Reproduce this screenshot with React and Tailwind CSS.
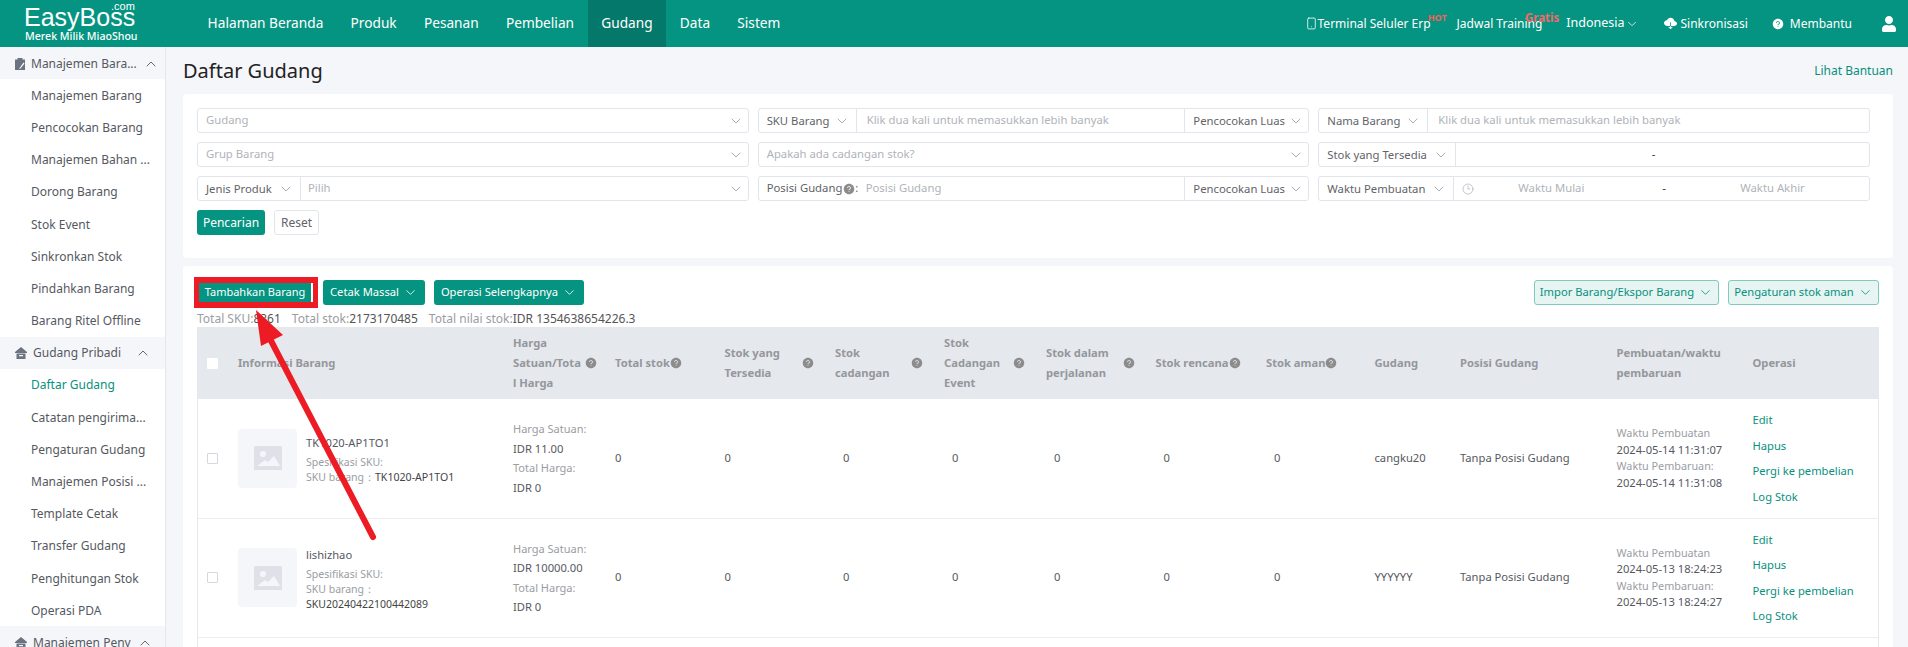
import { ChevronDown, ChevronUp, Clock3, Smartphone } from "lucide-react";
import { AiFillQuestionCircle } from "react-icons/ai";
import { IoCloudDownload } from "react-icons/io5";
import { FaUser } from "react-icons/fa";

const Help = ({ className = "" }) => <AiFillQuestionCircle className={"shrink-0 text-[12px] text-[#8c8c8c] " + className} />;
const Chev = () => <ChevronDown size={16} strokeWidth={1.1} className="shrink-0 text-[#8a8f99]" />;
const BtnChev = () => <ChevronDown size={15} strokeWidth={1.3} className="shrink-0" />;

const ClipboardIcon = () => (
  <svg width="10" height="12" viewBox="0 0 10 12" className="shrink-0">
    <path d="M0 1.5h2.5V0h5v1.5H10V12H0z" fill="#6b7280" />
    <path d="M8.5 4.5 9.5 5.5 5.5 10.5 4 11z" fill="#fff" />
  </svg>
);

const HomeIcon = () => (
  <svg width="12" height="12" viewBox="0 0 12 12" className="shrink-0">
    <path d="M6 0 12 5v1H0V5zM1.5 6.5h9V12h-9zM4 8v1.2h4V8z" fill="#6b7280" fillRule="evenodd" />
  </svg>
);

const ImageHolder = () => (
  <div className="w-[59px] h-[59px] shrink-0 bg-[#f5f6fa] rounded flex items-center justify-center">
    <svg width="28" height="24" viewBox="0 0 28 24">
      <rect width="28" height="24" fill="#dfe1e9" />
      <circle cx="9" cy="8" r="3" fill="#f5f6fa" />
      <path d="M3 20 11 14l3 2 6-6 6 10z" fill="#f5f6fa" />
    </svg>
  </div>
);

const Field = ({ children, className = "" }) => (
  <div className={"h-[25px] flex items-center border border-[#e3e5ec] rounded-[3px] bg-white text-[11.3px] text-[#5f6368] " + className}>{children}</div>
);

const Select = ({ label, width }) => (
  <div className={"h-full shrink-0 flex items-center justify-between pl-2 pr-1.5 border-r border-[#e3e5ec] " + width}>
    <span className="mt-px whitespace-nowrap">{label}</span>
    <Chev />
  </div>
);

const Match = () => (
  <div className="w-[124px] h-full shrink-0 flex items-center justify-between pl-2 pr-1 border-l border-[#e3e5ec]">
    <span className="mt-px whitespace-nowrap">Pencocokan Luas</span>
    <Chev />
  </div>
);

const cols = "grid grid-cols-[30px_275px_102px_109.5px_110.5px_109px_102px_109.5px_110.5px_108.5px_85.5px_156.5px_136px_135.5px]";

const Th = ({ children, help, tight }) => (
  <div className={"flex items-center pl-2.5 " + (tight ? "gap-0" : "justify-between pr-[11px]")}>
    <span className="leading-5">{children}</span>
    {help && <Help />}
  </div>
);

const Zero = ({ shift }) => <div className={"flex items-center " + (shift ? "pl-[18px]" : "pl-2.5")}>0</div>;

const Row = ({ name, sku, skuBelow, price, gudang, created, updated }) => (
  <div className={cols + " h-[119.5px] border-b border-[#eceef3] text-[11.2px] text-[#55595f]"}>
    <div className="flex items-center pl-[9px]">
      <span className="w-[11px] h-[11px] border border-[#d4d7de] rounded-[1px] bg-white" />
    </div>
    <div className="flex items-center gap-[9px] pl-2.5">
      <ImageHolder />
      <div className="pt-[3px] leading-[15px]">
        <div className="text-[#55595f] mb-[5px]">{name}</div>
        <div className="text-[10.5px] text-[#9a9da3]">Spesifikasi SKU:</div>
        <div className="text-[10.5px] text-[#9a9da3]">
          SKU barang：{!skuBelow && <span className="text-[#444] text-[10.6px]">{sku}</span>}
        </div>
        {skuBelow && <div className="text-[10.5px] text-[#444]">{sku}</div>}
      </div>
    </div>
    <div className="flex flex-col justify-center pl-2.5 leading-[19.5px]">
      <span className="text-[11px] text-[#9a9da3]">Harga Satuan:</span>
      <span>IDR {price}</span>
      <span className="text-[11px] text-[#9a9da3]">Total Harga:</span>
      <span>IDR 0</span>
    </div>
    <Zero />
    <Zero />
    <Zero shift />
    <Zero shift />
    <Zero shift />
    <Zero shift />
    <Zero shift />
    <div className="flex items-center pl-2.5">{gudang}</div>
    <div className="flex items-center pl-2.5">Tanpa Posisi Gudang</div>
    <div className="flex flex-col justify-center pl-2.5 leading-[16.5px]">
      <span className="text-[10.8px] text-[#9a9da3]">Waktu Pembuatan</span>
      <span>{created}</span>
      <span className="text-[10.8px] text-[#9a9da3]">Waktu Pembaruan:</span>
      <span>{updated}</span>
    </div>
    <div className="flex flex-col justify-center pl-2.5 leading-[25.5px] text-[#07907e]">
      <span>Edit</span>
      <span>Hapus</span>
      <span>Pergi ke pembelian</span>
      <span>Log Stok</span>
    </div>
  </div>
);

const subA = ["Manajemen Barang", "Pencocokan Barang", "Manajemen Bahan ...", "Dorong Barang", "Stok Event", "Sinkronkan Stok", "Pindahkan Barang", "Barang Ritel Offline"];
const subB = ["Daftar Gudang", "Catatan pengirima...", "Pengaturan Gudang", "Manajemen Posisi ...", "Template Cetak", "Transfer Gudang", "Penghitungan Stok", "Operasi PDA"];

const SideHead = ({ icon, label }) => (
  <div className="h-[32.2px] shrink-0 flex items-center gap-[6px] bg-[#f5f6fa] pl-[15px] pr-[14px] pt-px text-[#55595f]">
    {icon}
    <span className="flex-1 whitespace-nowrap">{label}</span>
    <ChevronUp size={16} strokeWidth={1.2} className="shrink-0 text-[#444]" />
  </div>
);

const SideItem = ({ label, active }) => (
  <div className={"h-[32.2px] shrink-0 flex items-center pl-[31px] pt-px whitespace-nowrap " + (active ? "text-[#07907e]" : "text-[#55595f]")}>{label}</div>
);

export default function App() {
  return (
    <div className="relative h-[647px] w-[1908px] overflow-hidden bg-[#f5f6fa] font-['Noto_Sans',sans-serif]">
      <header className="h-[47px] bg-[#059481] flex items-center text-white">
        <div className="relative w-[194px] h-full shrink-0 pl-[24px] pt-[4px]">
          <div className="font-['Liberation_Sans',sans-serif] text-[25px] leading-[26px]">EasyBoss</div>
          <div className="absolute left-[111px] top-[1px] font-['Liberation_Sans',sans-serif] text-[11px] leading-none">.com</div>
          <div className="pl-px text-[10.6px] leading-[13px] font-medium whitespace-nowrap">Merek Milik MiaoShou</div>
        </div>
        <nav className="flex h-full text-[13.7px]">
          <a className="h-full flex items-center px-[13.6px]">Halaman Beranda</a>
          <a className="h-full flex items-center px-[13.6px]">Produk</a>
          <a className="h-full flex items-center px-[13.6px]">Pesanan</a>
          <a className="h-full flex items-center px-[13.6px]">Pembelian</a>
          <a className="h-full flex items-center px-[13.6px] bg-[#04786a]">Gudang</a>
          <a className="h-full flex items-center px-[13.6px]">Data</a>
          <a className="h-full flex items-center px-[13.6px]">Sistem</a>
        </nav>
        <div className="ml-auto flex items-center text-xs pr-[11px]">
          <div className="relative flex items-center mr-[26px]">
            <Smartphone size={13} strokeWidth={1.5} />
            <span>Terminal Seluler Erp</span>
            <span className="absolute right-[-16px] top-[-3px] text-[9px] leading-none font-bold text-[#f0605c]">HOT</span>
          </div>
          <div className="relative mr-[24px]">
            <span>Jadwal Training</span>
            <span className="absolute right-[-17px] top-[-4px] text-[11.5px] leading-none font-bold text-[#ee6a6a]">Gratis</span>
          </div>
          <div className="flex items-center mr-[25px] text-[12.5px]">
            <span>Indonesia</span>
            <ChevronDown size={14} strokeWidth={1.3} />
          </div>
          <div className="flex items-center gap-1 mr-[24px]">
            <IoCloudDownload size={13} />
            <span>Sinkronisasi</span>
          </div>
          <div className="flex items-center gap-1.5 mr-[29px]">
            <AiFillQuestionCircle size={12} />
            <span>Membantu</span>
          </div>
          <FaUser size={16} />
        </div>
      </header>

      <div className="flex h-[600px]">
        <aside className="w-[166px] shrink-0 bg-white border-r border-[#e5e7eb] text-xs flex flex-col overflow-hidden">
          <SideHead icon={<ClipboardIcon />} label="Manajemen Bara..." />
          {subA.map((s) => <SideItem key={s} label={s} />)}
          <SideHead icon={<HomeIcon />} label="Gudang Pribadi" />
          {subB.map((s, i) => <SideItem key={s} label={s} active={i === 0} />)}
          <SideHead icon={<HomeIcon />} label="Manajemen Peny" />
        </aside>

        <main className="flex-1 pl-[17px] pr-[15px] min-w-0">
          <div className="h-[47px] flex items-center justify-between">
            <h1 className="text-xl text-[#222]">Daftar Gudang</h1>
            <a className="text-xs text-[#07907e]">Lihat Bantuan</a>
          </div>

          <section className="h-[164px] bg-white rounded pt-[14px] pl-[14px] pr-[23px]">
            <div className="grid grid-cols-3 gap-x-[9px] gap-y-[9px]">
              <Field className="justify-between pl-2 pr-1 text-[#b0b3b9]">Gudang<Chev /></Field>
              <Field>
                <Select label="SKU Barang" width="w-[98px]" />
                <span className="flex-1 pl-2.5 text-[#b0b3b9]">Klik dua kali untuk memasukkan lebih banyak</span>
                <Match />
              </Field>
              <Field>
                <Select label="Nama Barang" width="w-[109px]" />
                <span className="flex-1 pl-2.5 text-[#b0b3b9]">Klik dua kali untuk memasukkan lebih banyak</span>
              </Field>

              <Field className="justify-between pl-2 pr-1 text-[#b0b3b9]">Grup Barang<Chev /></Field>
              <Field className="justify-between pl-2 pr-1 text-[#b0b3b9]">Apakah ada cadangan stok?<Chev /></Field>
              <Field>
                <Select label="Stok yang Tersedia" width="w-[137px]" />
                <span className="flex-1 pr-[18px] text-center text-[#333]">-</span>
              </Field>

              <Field>
                <Select label="Jenis Produk" width="w-[103px]" />
                <span className="flex-1 pl-[7px] text-[#b0b3b9]">Pilih</span>
                <span className="pr-1"><Chev /></span>
              </Field>
              <Field>
                <div className="flex items-center pl-2 w-[99px] shrink-0 whitespace-nowrap">Posisi Gudang<Help className="ml-px" />:</div>
                <span className="flex-1 pl-2 text-[#b0b3b9]">Posisi Gudang</span>
                <Match />
              </Field>
              <Field>
                <Select label="Waktu Pembuatan" width="w-[135px]" />
                <Clock3 size={12} strokeWidth={1} className="ml-2 shrink-0 text-[#8a8f99]" />
                <span className="w-[154px] shrink-0 text-center text-[#b0b3b9]">Waktu Mulai</span>
                <span className="ml-[34px] text-[#333]">-</span>
                <span className="flex-1 pl-[10px] text-center text-[#b0b3b9]">Waktu Akhir</span>
              </Field>
            </div>
            <div className="mt-[9px] flex gap-[9px] text-xs">
              <button className="h-[25px] w-[68px] rounded-[3px] bg-[#059481] text-white">Pencarian</button>
              <button className="h-[25px] w-[45px] rounded-[3px] border border-[#e3e5ec] bg-white text-[#5f6368]">Reset</button>
            </div>
          </section>

          <section className="mt-2 bg-white rounded h-[400px] pt-[14px] pl-[14px] pr-[14px] text-[11.2px]">
            <div className="flex items-center">
              <div className="flex gap-[9px] pl-[2px]">
                <button className="h-[25px] w-[112px] rounded-[3px] bg-[#059481] text-white text-[11px]">Tambahkan Barang</button>
                <button className="h-[25px] w-[102px] ml-[3px] rounded-[3px] bg-[#059481] text-white flex items-center justify-center gap-1">Cetak Massal<BtnChev /></button>
                <button className="h-[25px] w-[150px] rounded-[3px] bg-[#059481] text-white flex items-center justify-center gap-1">Operasi Selengkapnya<BtnChev /></button>
              </div>
              <div className="ml-auto flex gap-[9px]">
                <button className="h-[25px] w-[185px] rounded-[3px] border border-[#7fcabf] bg-[#e6f4f2] text-[#07907e] flex items-center justify-center gap-1">Impor Barang/Ekspor Barang<BtnChev /></button>
                <button className="h-[25px] w-[151px] rounded-[3px] border border-[#7fcabf] bg-[#e6f4f2] text-[#07907e] flex items-center justify-center gap-1">Pengaturan stok aman<BtnChev /></button>
              </div>
            </div>
            <div className="h-[22px] pt-[6px] flex items-center gap-[11px] text-xs text-[#9a9da3]">
              <span>Total SKU:<span className="text-[#555]">8361</span></span>
              <span>Total stok:<span className="text-[#555]">2173170485</span></span>
              <span>Total nilai stok:<span className="text-[#555]">IDR 1354638654226.3</span></span>
            </div>
            <div className="border-x border-[#e5e8ed] h-[320px]">
              <div className={cols + " h-[72px] bg-[#e5e8ed] font-bold text-[#94979c]"}>
                <div className="flex items-center pl-[9px]"><span className="w-[11px] h-[11px] rounded-[1px] bg-white" /></div>
                <Th>Informasi Barang</Th>
                <div className="flex items-center pl-2.5 leading-5">
                  <span>Harga<br />Satuan/Tota<br />l Harga</span>
                  <Help className="ml-[4px] mb-px" />
                </div>
                <Th help tight>Total stok</Th>
                <Th help>Stok yang<br />Tersedia</Th>
                <Th help>Stok<br />cadangan</Th>
                <Th help>Stok<br />Cadangan<br />Event</Th>
                <Th help>Stok dalam<br />perjalanan</Th>
                <Th help tight>Stok rencana</Th>
                <Th help tight>Stok aman</Th>
                <Th>Gudang</Th>
                <Th>Posisi Gudang</Th>
                <Th>Pembuatan/waktu<br />pembaruan</Th>
                <Th>Operasi</Th>
              </div>
              <Row name="TK1020-AP1TO1" sku="TK1020-AP1TO1" price="11.00" gudang="cangku20" created="2024-05-14 11:31:07" updated="2024-05-14 11:31:08" />
              <Row name="lishizhao" sku="SKU20240422100442089" skuBelow price="10000.00" gudang="YYYYYY" created="2024-05-13 18:24:23" updated="2024-05-13 18:24:27" />
            </div>
          </section>
        </main>
      </div>

      {/* callout around the add button */}
      <div className="absolute left-[194px] top-[277px] w-[124px] h-[31px] border-x-[5px] border-y-[6px] border-[#ed1c24] pointer-events-none" />
      <svg className="absolute left-0 top-0 pointer-events-none" width="1908" height="647">
        <line x1="373" y1="537" x2="268" y2="335" stroke="#ed1c24" strokeWidth="6" strokeLinecap="round" />
        <path d="M256 310 283 335 261 346z" fill="#ed1c24" />
      </svg>
    </div>
  );
}
